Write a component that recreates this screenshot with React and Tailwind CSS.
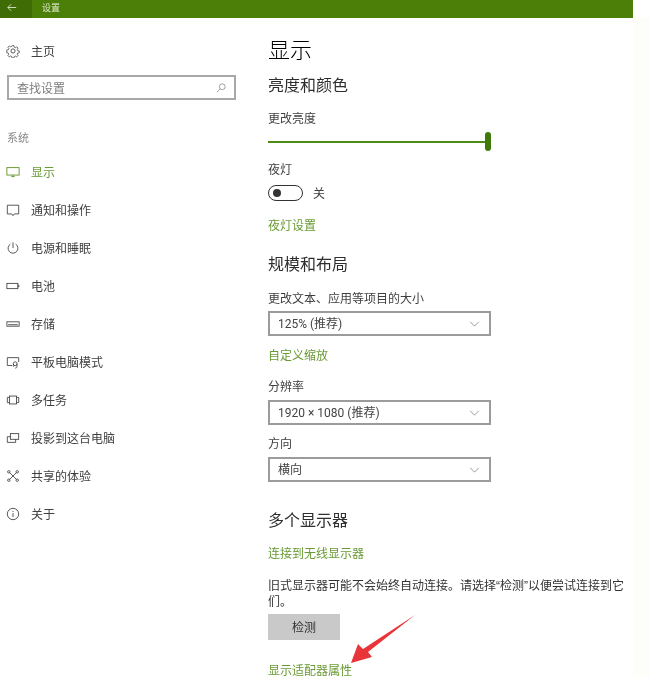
import React from "react";

const Ic = ({ children, className = "" }) => (
  <svg viewBox="0 0 16 16" fill="none" stroke="currentColor" strokeWidth="1" className={"w-[14px] h-[14px] shrink-0 " + className}>
    {children}
  </svg>
);

const Gear = () => (
  <Ic className="text-[#444]">
    <circle cx="8" cy="8" r="2.4" />
    <path d="M6.8 1.2h2.4l.4 2 1.4.6 1.7-1.1 1.7 1.7-1.1 1.7.6 1.4 2 .4v2.4l-2 .4-.6 1.4 1.1 1.7-1.7 1.7-1.7-1.1-1.4.6-.4 2H6.8l-.4-2-1.4-.6-1.7 1.1-1.7-1.7 1.1-1.7-.6-1.4-2-.4V6.8l2-.4.6-1.4-1.1-1.7 1.7-1.7 1.7 1.1 1.4-.6z" transform="translate(0.8 0.8) scale(0.9)" />
  </Ic>
);

const icons = {
  display: <><rect x="1" y="3" width="14" height="8.5" /><path d="M8 11.5v1.5M6 13.2h4" /></>,
  notify: <path d="M1.5 2.5h13v10h-5l-1.5 2-1.5-2h-5z" />,
  power: <><path d="M8 1.5v6.5" /><path d="M5 3.6a5.6 5.6 0 1 0 6 0" /></>,
  battery: <><rect x="1" y="5" width="12.5" height="6" /><path d="M13.5 7h1.2v2h-1.2" /></>,
  storage: <><rect x="1" y="5.5" width="14" height="5" /><path d="M2.5 8.8h11" /></>,
  tablet: <><path d="M7 12H1.5V3h13v5" /><circle cx="10.5" cy="10" r="2.2" /><path d="M9 13.5c-1-1-1-2 0-3M12.5 10v3.5c0 1-1 1.5-2 1.5" /></>,
  multi: <><rect x="4" y="3.5" width="8" height="9" /><path d="M4 5H1.5v6H4M12 5h2.5v6H12" /></>,
  project: <><rect x="5" y="3" width="9.5" height="6.5" /><path d="M5 6.5H1.5v6.5H11V9.5" /></>,
  share: <><path d="M4 4l8 8M12 4l-8 8" /><circle cx="3.2" cy="3.2" r="1.4" /><circle cx="12.8" cy="3.2" r="1.4" /><circle cx="3.2" cy="12.8" r="1.4" /><circle cx="12.8" cy="12.8" r="1.4" /></>,
  info: <><circle cx="8" cy="8" r="6.5" /><path d="M8 7v4.5M8 4.4v1.2" /></>,
};

const items = [
  ["display", "显示", true],
  ["notify", "通知和操作"],
  ["power", "电源和睡眠"],
  ["battery", "电池"],
  ["storage", "存储"],
  ["tablet", "平板电脑模式"],
  ["multi", "多任务"],
  ["project", "投影到这台电脑"],
  ["share", "共享的体验"],
  ["info", "关于"],
];

const Select = ({ value, className = "" }) => (
  <div
    className={"w-[223px] h-[25px] border-2 border-[#9b9b9b] flex items-center justify-between pl-[8px] pr-[9px] text-[12px] text-[#444] " + className}
    style={{ fontFamily: 'Roboto, "Noto Sans CJK SC", sans-serif' }}
  >
    <span>{value}</span>
    <svg viewBox="0 0 12 7" fill="none" stroke="#8a8a8a" strokeWidth="1" className="w-[11px] h-[6px]">
      <path d="M1 1l5 5 5-5" />
    </svg>
  </div>
);

export default function App() {
  return (
    <div
      className="relative w-[650px] h-[677px] overflow-hidden bg-white flex flex-col blur-[0.3px]"
      style={{ fontFamily: '"Noto Sans CJK SC", "Noto Sans", sans-serif' }}
    >
      <header className="w-[633px] h-[18px] shrink-0 bg-[#4b7f07] flex items-center text-[9px] text-[#dfe9cf]">
        <div className="w-[32px] h-full bg-[#3f6c05] flex items-center pl-[7px] pb-[3px]">
          <svg viewBox="0 0 12 10" fill="none" stroke="#e6eedb" strokeWidth="1" className="w-[10px] h-[9px]">
            <path d="M11 5H1M5 1L1 5l4 4" />
          </svg>
        </div>
        <span className="ml-[10px] pb-[2px]">设置</span>
      </header>

      <div className="flex flex-1 min-h-0">
        <aside className="w-[268px] shrink-0 text-[12px] text-[#404040]">
          <div className="h-[18px] mt-[24px] pl-[6px] flex items-center gap-[11px]">
            <Gear />
            <span>主页</span>
          </div>
          <div className="mt-[15px] ml-[7px] w-[229px] h-[25px] border-2 border-[#a8a8a8] flex items-center justify-between pl-[8px] pr-[8px] text-[#7d7d7d]">
            <span>查找设置</span>
            <svg viewBox="0 0 12 12" fill="none" stroke="#8f8f8f" strokeWidth="1" className="w-[10px] h-[10px]">
              <circle cx="7.5" cy="4.5" r="3.5" />
              <path d="M5 7l-4 4" />
            </svg>
          </div>
          <div className="mt-[28px] ml-[7px] h-[18px] leading-[18px] text-[11px] text-[#8a8a8a]">系统</div>
          <nav className="mt-[7px] flex flex-col">
            {items.map(([icon, label, active]) => (
              <div key={label} className={"h-[38px] pl-[6px] flex items-center gap-[11px] " + (active ? "text-[#6a9a35]" : "")}>
                <Ic className={active ? "text-[#5c9020]" : "text-[#444]"}>{icons[icon]}</Ic>
                <span>{label}</span>
              </div>
            ))}
          </nav>
        </aside>

        <main className="w-[365px] shrink-0 text-[12px] leading-[18px] text-[#3f3f3f]">
          <h1 className="mt-[14px] h-[32px] leading-[32px] text-[22px] font-light text-black">显示</h1>
          <h2 className="mt-[8px] h-[24px] leading-[24px] text-[16px] font-normal text-[#2e2e2e]">亮度和颜色</h2>
          <p className="mt-[13px]">更改亮度</p>

          <div className="mt-[5px] w-[223px] h-[19px] flex items-center">
            <div className="flex-1 h-[2px] bg-[#4f8a14]" />
            <div className="w-[6px] h-[19px] rounded-full bg-[#3f7a08]" />
          </div>

          <p className="mt-[9px]">夜灯</p>
          <div className="mt-[7px] h-[16px] flex items-center gap-[10px]">
            <div className="w-[35px] h-[16px] rounded-full border-[1.5px] border-[#333] flex items-center pl-[4px]">
              <div className="w-[8px] h-[8px] rounded-full bg-[#333]" />
            </div>
            <span>关</span>
          </div>
          <p className="mt-[15px] text-[#6a9a35]">夜灯设置</p>

          <h2 className="mt-[17px] h-[24px] leading-[24px] text-[16px] font-normal text-[#2e2e2e]">规模和布局</h2>
          <p className="mt-[14px]">更改文本、应用等项目的大小</p>
          <Select value="125% (推荐)" className="mt-[4px]" />
          <p className="mt-[10px] text-[#6a9a35]">自定义缩放</p>
          <p className="mt-[13px]">分辨率</p>
          <Select value="1920 × 1080 (推荐)" className="mt-[5px]" />
          <p className="mt-[9px]">方向</p>
          <Select value="横向" className="mt-[5px]" />

          <h2 className="mt-[25px] h-[24px] leading-[24px] text-[16px] font-normal text-[#2e2e2e]">多个显示器</h2>
          <p className="mt-[13px] text-[#6a9a35]">连接到无线显示器</p>
          <p
            className="mt-[16px] w-[360px] leading-[16px] text-[#333]"
            style={{ fontFamily: '"Liberation Sans", "Noto Sans CJK SC", sans-serif' }}
          >
            旧式显示器可能不会始终自动连接。请选择“检测”以便尝试连接到它们。
          </p>
          <div className="mt-[4px] w-[72px] h-[26px] bg-[#c9c9c9] flex items-center justify-center text-[#333]">检测</div>
          <p className="mt-[21px] text-[#6a9a35]">显示适配器属性</p>
        </main>

        <div className="flex-1 bg-[#fdfdfa]" />
      </div>

      <svg viewBox="0 0 650 677" className="absolute inset-0 w-[650px] h-[677px] pointer-events-none">
        <polygon points="415,615 368,652 372,657 351,663 358,644 363,649" fill="#e8353a" />
      </svg>
    </div>
  );
}
